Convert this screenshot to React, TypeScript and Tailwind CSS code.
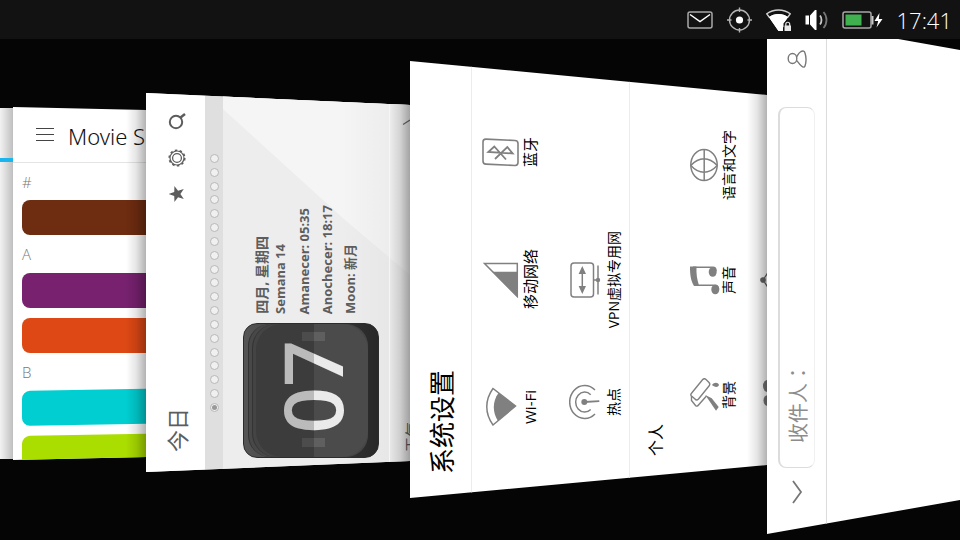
import React from "react";

const LATIN = "font-['Open_Sans','Noto_Sans_CJK_SC',sans-serif]";
const SIDE = "rotate-180 [writing-mode:vertical-rl] [text-orientation:sideways] whitespace-nowrap";

function EdgeShadow() {
  return <div className="pointer-events-none absolute inset-y-0 right-0 w-5 bg-linear-to-r from-transparent via-black/10 to-black/30" />;
}

/* ---------- status bar ---------- */

function StatusBar() {
  return (
    <header className="z-10 flex h-[39px] shrink-0 items-center justify-end gap-[14px] bg-[#121212] pr-2 text-white">
      <svg width="26" height="18" viewBox="0 0 26 18" fill="none" aria-label="Messages">
        <rect x="1" y="1" width="24" height="16" rx="2" stroke="#a8a8a8" strokeWidth="1.5" />
        <path d="M3 3.5L13 10.5L23 3.5" stroke="#fff" strokeWidth="1.5" />
      </svg>
      <svg width="25" height="26" viewBox="0 0 25 26" fill="none" stroke="#b4b4b4" strokeWidth="1.4" aria-label="Location">
        <circle cx="12.5" cy="13" r="10" />
        <path d="M12.5 0.5V5M12.5 21V25.5M0 13H4.5M20.5 13H25" />
        <circle cx="12.5" cy="13" r="3.6" fill="#fff" stroke="none" />
      </svg>
      <svg width="25" height="24" viewBox="0 0 25 24" fill="none" aria-label="Wi-Fi">
        <path d="M3.5 9.5L0.8 5.8C7.5 0.7 17.5 0.7 24.2 5.8L21.5 9.5" stroke="#d0d0d0" strokeWidth="1.4" />
        <path d="M3 9.2C8.5 5 16.5 5 22 9.2L18.5 14H17V23H12.5Z" fill="#fff" />
        <rect x="17.5" y="14.5" width="8" height="9.5" fill="#121212" />
        <path d="M3 9.2C8.500 5 16.500 5 22 9.200L17.500 15.500V19L12.500 23Z" fill="#fff" />
        <rect x="18.500" y="17.500" width="6.500" height="5.500" fill="#e8e8e8" />
        <path d="M19.800 18V16.200a1.900 1.900 0 0 1 3.900 0V18" stroke="#e8e8e8" strokeWidth="1.200" />
      </svg>
      <svg width="23" height="22" viewBox="0 0 23 22" fill="none" aria-label="Volume">
        <path d="M0.500 6.500H4V15.500H0.500ZM5 6.500L10 1H11.500V21H10L5 15.500Z" fill="#fff" />
        <path d="M15 6.500C17 9 17 13 15 15.500" stroke="#c8c8c8" strokeWidth="1.800" />
        <path d="M18.500 3C22.500 7.500 22.500 14.500 18.500 19" stroke="#777" strokeWidth="1.800" />
      </svg>
      <svg width="41" height="18" viewBox="0 0 41 18" fill="none" aria-label="Battery charging">
        <rect x="1" y="1" width="28" height="16" rx="2" stroke="#a8a8a8" strokeWidth="1.500" />
        <rect x="3.500" y="3.500" width="16" height="11" fill="#3fb24f" />
        <rect x="29.500" y="5" width="2" height="8.500" fill="#c8c8c8" />
        <path d="M37.500 2L32.500 10H36.200L34.500 16.500L40.500 8H36.800Z" fill="#fff" />
      </svg>
      <time className="text-[22px] leading-none font-light">17:41</time>
    </header>
  );
}

/* ---------- movie scope ---------- */

function MovieWindow() {
  return (
    <section className="relative mt-[68px] h-[353px] w-[133px] shrink-0 overflow-hidden bg-white [clip-path:polygon(0_0,100%_3px,100%_350px,0_100%)]">
      <div className="flex h-14 items-center gap-[14px] border-b border-[#e4e4e4] pl-[23px]">
        <button aria-label="Menu" className="flex w-[18px] flex-col gap-[5px]">
          <span className="h-px w-full bg-[#444]" />
          <span className="h-px w-full bg-[#444]" />
          <span className="h-px w-full bg-[#444]" />
        </button>
        <h2 className="pt-1 font-['Noto_Sans',sans-serif] text-[22px] font-light whitespace-nowrap text-[#111]">Movie S</h2>
      </div>
      <div className="pl-[9px] text-[15px] leading-[38px] font-light text-[#777]">
        <h3 className="h-[37px]">#</h3>
        <div className="h-[35px] rounded-l-lg bg-[#6e2c10]" />
        <h3>A</h3>
        <div className="h-[35px] rounded-l-lg bg-[#77216f]" />
        <div className="mt-[10px] h-[35px] rounded-l-lg bg-[#dd4814]" />
        <h3>B</h3>
        <div className="h-[35px] origin-left -skew-y-1 rounded-l-lg bg-[#00ced1]" />
        <div className="mt-[10px] h-[35px] origin-left -skew-y-1 rounded-l-lg bg-[#aadd00]" />
      </div>
      <EdgeShadow />
    </section>
  );
}

/* ---------- today scope ---------- */

function starPoints() {
  return Array.from({ length: 10 }, (_, i) => {
    const r = i % 2 ? 3.4 : 8.4;
    const a = Math.PI + (i * Math.PI) / 5;
    return `${9 + r * Math.cos(a)},${9 + r * Math.sin(a)}`;
  }).join(" ");
}

function TodayWindow() {
  return (
    <section className="relative mt-[54px] flex h-[379px] w-[264px] shrink-0 overflow-hidden bg-[#eeedee] [clip-path:polygon(0_0,100%_12px,100%_368px,0_100%)]">
      <div className="flex w-[59px] shrink-0 flex-col items-center bg-white pt-[10px] pb-5 pl-[2px]">
        <button aria-label="Search" className="flex h-9 items-center">
          <svg width="18" height="18" viewBox="0 0 18 18" fill="none" stroke="#5d5d5d">
            <circle cx="8" cy="10" r="6.2" strokeWidth="2" />
            <path d="M12.500 5.500L17 2" strokeWidth="2.500" />
          </svg>
        </button>
        <button aria-label="Settings" className="flex h-[37px] items-center">
          <svg width="18" height="18" viewBox="0 0 18 18" fill="none" stroke="#5d5d5d">
            <circle cx="9" cy="9" r="7" strokeWidth="1.200" />
            <circle cx="9" cy="9" r="7.800" strokeWidth="1.600" strokeDasharray="2.500 2.400" />
            <circle cx="9" cy="9" r="4.400" strokeWidth="1.300" />
          </svg>
        </button>
        <button aria-label="Favorite" className="flex h-9 items-center">
          <svg width="18" height="18" viewBox="0 0 18 18" fill="#5d5d5d">
            <polygon points={starPoints()} />
          </svg>
        </button>
        <h2 className={`${SIDE} mt-auto text-[22px] leading-7 text-[#5d5d5d]`}>今日</h2>
      </div>
      <div className="flex w-[18px] shrink-0 flex-col items-center justify-between bg-[#dfdfdf] pt-[61px] pb-[60px]">
        {Array.from({ length: 18 }, (_, i) => (
          <span key={i} className="size-[9px] rounded-full border border-[#b8b8b8] bg-[#f0f0f0]" />
        ))}
        <span className="flex size-[9px] items-center justify-center rounded-full border border-[#b8b8b8] bg-[#f0f0f0]">
          <span className="size-[5px] rounded-full bg-[#999]" />
        </span>
      </div>
      <div className="relative flex flex-1 bg-linear-to-r from-[#eeedee] from-60% to-[#e4e3e4]">
        <div className="absolute inset-0 bg-linear-to-r from-[#f6f5f6] from-60% to-[#e8e7e8] [clip-path:polygon(0_0,100%_0,100%_192px,122px_127px,0_16px)]" />
        <div className="relative flex w-[166px] flex-col justify-end gap-[9px] pb-[14px] pl-5">
          <div className="flex items-end pl-[9px] font-['Noto_Sans','Noto_Sans_CJK_SC',sans-serif] text-[13px] font-bold text-[#5d5d5d]">
            <p className={`${SIDE} text-[14px] leading-[19px]`}>四月, 星期四</p>
            <p className={`${SIDE} leading-[19px]`}>Semana 14</p>
            <p className={`${SIDE} ml-[3px] leading-[23px]`}>Amanecer: 05:35</p>
            <p className={`${SIDE} leading-[23px]`}>Anochecer: 18:17</p>
            <p className={`${SIDE} leading-[23px]`}>Moon: 新月</p>
          </div>
          <div className="relative flex h-[135px] w-[136px] items-center justify-center overflow-hidden rounded-[14px] border border-[#2c2c2c] bg-linear-to-r from-[#555] via-[#3c3c3c] to-[#282828] pb-2">
            <div className="absolute inset-y-0 right-[10px] left-1 rounded-[22px] border-l border-[#333] bg-[#484848]" />
            <div className="absolute inset-y-0 right-[10px] left-2 rounded-[24px] border-l border-[#333] bg-[#444]" />
            <div className="absolute inset-y-0 right-[10px] left-3 rounded-[26px] bg-[#4b4b4b]" />
            <div className="absolute top-2 left-[58px] h-[9px] w-[23px] bg-[#5f5f5f]" />
            <div className="absolute bottom-[10px] left-[58px] h-[9px] w-[23px] bg-[#5f5f5f]" />
            <span className={`${SIDE} relative text-[82px] leading-none font-semibold text-[#eaeaea]`}>07</span>
            <div className="absolute inset-y-0 left-3 w-[58px] rounded-l-[26px] bg-black/20" />
          </div>
        </div>
        <div className="relative flex flex-1 flex-col justify-between border-l border-[#f6f5f6] pt-[26px] pb-5 pl-3 text-[#5d5d5d]">
          <svg width="9" height="6" viewBox="0 0 9 6" fill="none" stroke="#666" strokeWidth="1.200">
            <path d="M1 5.500L8 1" />
          </svg>
          <span className={`${SIDE} text-[15px] leading-5`}>天气</span>
        </div>
      </div>
      <EdgeShadow />
    </section>
  );
}

/* ---------- system settings ---------- */

const G = "#808080";

const icons = {
  bluetooth: (
    <svg width="37" height="30" viewBox="0 0 37 30" fill="none" stroke={G} strokeWidth="1.600">
      <rect x="1" y="1" width="35" height="25" rx="3" transform="skewY(2.500)" />
      <path d="M24 21.500L12.300 8.500L6.300 14L30.700 15.500L25.300 9L13 21" strokeWidth="1.800" />
    </svg>
  ),
  mobile: (
    <svg width="37" height="36" viewBox="0 0 37 36">
      <path d="M2.500 1.500H35.300V34.500Z" fill="none" stroke={G} strokeWidth="1.500" />
      <path d="M10.500 9.700H35.500V35Z" fill={G} />
    </svg>
  ),
  wifi: (
    <svg width="37" height="40" viewBox="0 0 37 40">
      <path d="M11 1.500C2.700 13 2.700 26.500 11 38L33.500 19Z" fill="none" stroke={G} strokeWidth="1.500" />
      <path d="M16.500 6C10.300 14.500 10.300 25.500 16 34L33.700 19Z" fill={G} />
    </svg>
  ),
  vpn: (
    <svg width="34" height="36" viewBox="0 0 34 36" fill="none" stroke={G} strokeWidth="1.500">
      <rect x="2" y="1" width="22.500" height="34" rx="3" />
      <path d="M13.300 8V28M29 3.500V32.500M24.500 18H31" />
      <path d="M13.300 4L17 12H9.600ZM13.300 32L17 24H9.600Z" fill={G} stroke="none" />
      <circle cx="29" cy="18" r="2.200" fill={G} stroke="none" />
    </svg>
  ),
  hotspot: (
    <svg width="34" height="36" viewBox="0 0 34 36" fill="none" stroke={G} strokeWidth="1.500">
      <path d="M26 6A15 16.500 0 1 0 26 30" />
      <path d="M21.700 10.700A9 10 0 1 0 21.700 25.500" />
      <path d="M15.300 18L30.300 17.200" strokeWidth="1.800" />
      <circle cx="15.300" cy="18" r="3" fill={G} stroke="none" />
    </svg>
  ),
  language: (
    <svg width="28" height="34" viewBox="0 0 28 34" fill="none" stroke={G} strokeWidth="1.500">
      <ellipse cx="14" cy="17" rx="13.200" ry="15.500" />
      <path d="M14.200 1.500V32.500M0.800 17.500C9 8.500 19 8.500 27.200 17.500M0.800 17.500C9 26.500 19 26.500 27.200 17.500" />
    </svg>
  ),
  sound: (
    <svg width="30" height="30" viewBox="0 0 30 30" fill={G}>
      <path d="M0 1.500H6.500C6.200 9 7 14 9 20.500L4 21C0.500 15 0 9 0 1.500Z" />
      <path d="M3 2.300H23Q26 2.300 26 6M5 20.200H25Q28.300 20.200 28.500 24" fill="none" stroke={G} strokeWidth="1.500" />
      <ellipse cx="22.700" cy="7" rx="4" ry="4.800" />
      <ellipse cx="25.300" cy="24.500" rx="4" ry="4.800" />
    </svg>
  ),
  background: (
    <svg width="30" height="36" viewBox="0 0 30 36" fill="none" stroke={G} strokeWidth="1.400">
      <path d="M1.500 16.200L12.500 2.800Q14.300 0.800 16 2.500L19 5.500Q20.500 7.300 19 9L8.500 22Q6.500 24 5 22L1.500 19Q0.200 17.700 1.500 16.200Z" />
      <path d="M1.500 19V23.500L5.500 28.500Q7 30 8.500 28L16.500 19" />
      <path d="M15.300 18L21.700 21.300L28.700 30L26 33.700Z" fill={G} stroke="none" />
      <path d="M22 8C24 5 28 5 29 8C28 11 24 10 22 8Z" fill={G} stroke="none" />
    </svg>
  ),
  share: (
    <svg width="10" height="18" viewBox="0 0 10 18" fill="#666" stroke="#666" strokeWidth="1.300">
      <circle cx="3" cy="9" r="2.200" />
      <path d="M3 9L8 1.500M3 9L8 16.500" />
    </svg>
  ),
  accounts: (
    <svg width="10" height="28" viewBox="0 0 10 28" fill="#777">
      <ellipse cx="8" cy="7" rx="5" ry="6.200" />
      <ellipse cx="8" cy="21.500" rx="4.500" ry="5.500" />
    </svg>
  ),
};

type Item = { icon: keyof typeof icons; label?: string; name?: string } | null;

function SettingsColumn({ items, row, iconBox, text }: { items: Item[]; row: string; iconBox: string; text: string }) {
  return (
    <div className="flex shrink-0 flex-col justify-center">
      {items.map((item, i) =>
        item ? (
          <button key={i} aria-label={item.name} className={`${row} flex items-center gap-[2px]`}>
            <span className={`${iconBox} shrink-0 [&>svg]:max-w-none`}>{icons[item.icon]}</span>
            {item.label && <span className={`${SIDE} ${text} leading-[18px] text-black`}>{item.label}</span>}
          </button>
        ) : (
          <span key={i} className={row} />
        ),
      )}
    </div>
  );
}

function SettingsWindow() {
  return (
    <section className="relative mt-[22px] flex h-[437px] w-[357px] shrink-0 overflow-hidden bg-white [clip-path:polygon(0_0,100%_34px,100%_404px,0_100%)]">
      <div className="flex w-[62px] shrink-0 items-end justify-center border-r border-[#ececec] pb-6 pl-[2px]">
        <h2 className={`${SIDE} text-[26px] leading-8 text-black`}>系统设置</h2>
      </div>
      <div className="flex w-[158px] shrink-0 gap-[30px] border-r border-[#ececec] pl-[10px]">
        <SettingsColumn
          row="h-[127px]"
          iconBox="w-[37px]"
          text="text-[15px]"
          items={[
            { icon: "bluetooth", label: "蓝牙" },
            { icon: "mobile", label: "移动网络" },
            { icon: "wifi", label: "Wi-Fi" },
          ]}
        />
        <SettingsColumn
          row="h-[122px]"
          iconBox="w-[34px]"
          text="text-[14px]"
          items={[null, { icon: "vpn", label: "VPN虚拟专用网" }, { icon: "hotspot", label: "热点" }]}
        />
      </div>
      <div className="flex flex-1 pl-[17px]">
        <h3 className={`${SIDE} mr-[25px] mb-[42px] self-end text-[16px] leading-[18px] text-black`}>个人</h3>
        <SettingsColumn
          row="h-[115px]"
          iconBox="w-[28px]"
          text="text-[14px]"
          items={[
            { icon: "language", label: "语言和文字" },
            { icon: "sound", label: "声音" },
            { icon: "background", label: "背景" },
          ]}
        />
        <div className="w-[22px] shrink-0" />
        <SettingsColumn
          row="h-[113px]"
          iconBox="w-[10px]"
          text="text-[14px]"
          items={[null, { icon: "share", name: "Share" }, { icon: "accounts", name: "Accounts" }]}
        />
      </div>
      <EdgeShadow />
    </section>
  );
}

/* ---------- message composer ---------- */

function ComposeWindow() {
  return (
    <section className="flex h-[495px] flex-1 bg-white [clip-path:polygon(0_0,68%_0,100%_11px,100%_461px,0_100%)]">
      <div className="flex w-[60px] shrink-0 flex-col items-center border-r border-[#dcdcdc] pt-[10px] pb-[30px]">
        <button aria-label="Add contact">
          <svg width="20" height="20" viewBox="0 0 20 20" fill="none" stroke="#777" strokeWidth="1.400">
            <ellipse cx="5.500" cy="9.500" rx="4.300" ry="5" />
            <path d="M9.500 8C10.500 6.500 11.500 4 14 2.500C16 1.500 17.500 2 18 4C19.300 8 19.300 13 18 17C17.500 18.500 16 18.500 14.500 17C11.500 14.500 11 12.500 9.500 11.500" />
          </svg>
        </button>
        <input
          aria-label="收件人"
          placeholder="收件人："
          className="mt-[38px] min-h-0 w-[37px] flex-1 rotate-180 rounded-lg border border-r-2 border-[#dcdcdc] border-l-[#f0f0f0] bg-white px-6 font-['Noto_Sans_CJK_TC',sans-serif] text-[20px] outline-none [text-orientation:sideways] [writing-mode:vertical-rl] placeholder:text-[#8c8c8c]"
        />
        <button aria-label="Back" className="mt-3">
          <svg width="12" height="24" viewBox="0 0 12 24" fill="none" stroke="#777" strokeWidth="1.800">
            <path d="M2 1L10 12L2 23" />
          </svg>
        </button>
      </div>
    </section>
  );
}

export default function App() {
  return (
    <div className={`${LATIN} flex h-screen flex-col overflow-hidden bg-[#050505]`}>
      <StatusBar />
      <main className="flex min-h-0 flex-1 items-start">
        <section className="relative mt-[69px] h-[351px] w-[13px] shrink-0 bg-white pt-[50px]">
          <div className="absolute inset-0 bg-linear-to-r from-black/5 to-black/25" />
          <div className="relative h-1 bg-[#19b6ee]" />
        </section>
        <MovieWindow />
        <TodayWindow />
        <SettingsWindow />
        <ComposeWindow />
      </main>
    </div>
  );
}
